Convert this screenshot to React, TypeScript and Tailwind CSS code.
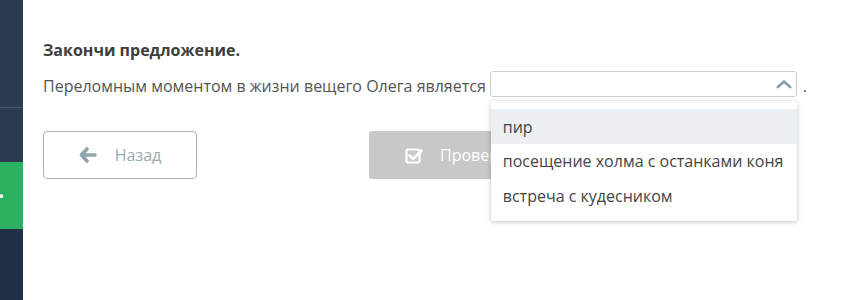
import React from "react";

export default function App() {
  const font = { fontFamily: '"Open Sans", "Noto Sans", sans-serif' };
  return (
    <div className="w-[868px] h-[300px] flex bg-white overflow-hidden" style={font}>
      <div className="w-[23px] h-full flex flex-col shrink-0">
        <div className="h-[108px] bg-[#2c3b50] border-b border-[#4a5a6d]"></div>
        <div className="h-[54px] bg-[#2c3b50]"></div>
        <div className="h-[67px] bg-[#2bb05f] flex items-center">
          <div className="w-[3px] h-[4px] bg-white rounded-full"></div>
        </div>
        <div className="flex-1 bg-[#1f3047]"></div>
      </div>
      <div className="flex-1 pl-[20px] pt-[39px] relative">
        <div className="text-[16px] font-bold text-[#3d3d3d] leading-[22px]">Закончи предложение.</div>
        <div className="mt-[10px] flex items-center text-[16px] text-[#555] leading-[22px]">
          <span className="pt-[3px]">Переломным моментом в жизни вещего Олега является</span>
          <div className="relative ml-[4px]">
            <div className="w-[307px] h-[26px] border border-[#c9d1d6] rounded-[3px] flex items-center justify-end pr-[4px]">
              <svg width="16" height="10" viewBox="0 0 16 10">
                <path d="M2 8 L8 2.5 L14 8" fill="none" stroke="#86a6ab" strokeWidth="3" strokeLinecap="round" strokeLinejoin="round" />
              </svg>
            </div>
            <div className="absolute left-[1px] top-[30px] w-[306px] bg-white rounded-[3px] shadow-[0_1px_5px_rgba(0,0,0,0.25)] py-[8px] z-10 text-[16px] text-[#444]">
              <div className="h-[35px] bg-[#ecf0f3] flex items-center pl-[12px]">пир</div>
              <div className="h-[34px] flex items-center pl-[12px]">посещение холма с останками коня</div>
              <div className="h-[35px] flex items-center pl-[12px]">встреча с кудесником</div>
            </div>
          </div>
          <span className="ml-[6px] pt-[3px]">.</span>
        </div>
        <div className="mt-[34px] flex items-start">
          <div className="w-[154px] h-[48px] border border-[#aab3ba] rounded-[4px] flex items-center justify-center gap-[18px] text-[#9aabb3] text-[16px]">
            <svg width="18" height="16" viewBox="0 0 18 16">
              <path d="M8 2 L2.5 8 L8 14 M3 8 H16" fill="none" stroke="#8fa4ad" strokeWidth="3.6" strokeLinecap="round" strokeLinejoin="round" />
            </svg>
            <span>Назад</span>
          </div>
          <div className="ml-[172px] w-[170px] h-[48px] bg-[#c8c8c8] rounded-[3px] flex items-center pl-[36px] gap-[16px] text-white text-[16px]">
            <svg width="19" height="17" viewBox="0 0 19 17">
              <rect x="1.5" y="2.5" width="13" height="13" rx="2" fill="none" stroke="white" strokeWidth="2.2" />
              <path d="M4.5 8.5 L8 12 L16.5 3.5" fill="none" stroke="white" strokeWidth="2.6" strokeLinecap="round" strokeLinejoin="round" />
            </svg>
            <span>Проверить</span>
          </div>
        </div>
      </div>
    </div>
  );
}
